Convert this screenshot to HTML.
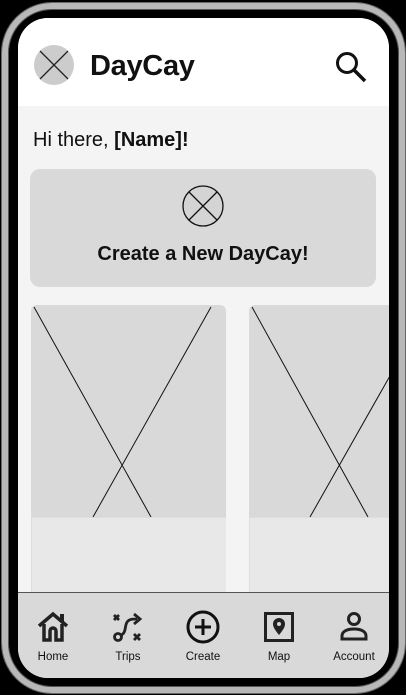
<!DOCTYPE html>
<html><head><style>
*{margin:0;padding:0;box-sizing:border-box}
body{width:406px;height:695px;background:#000;position:relative;overflow:hidden;font-family:"Liberation Sans",sans-serif}
.ring{position:absolute;left:2px;top:3px;width:403px;height:690px;border-radius:50px;border:6px solid #b8b8b8;box-shadow:inset 0 0 0 1px #555,0 0 0 1px #666}
.screen{position:absolute;left:18px;top:18px;width:371px;height:660px;border-radius:30px;background:#f4f4f4;overflow:hidden}
.hdr{position:absolute;left:0;top:0;width:371px;height:88px;background:#fff}
.title{position:absolute;left:72px;top:32px;font-size:29px;font-weight:bold;color:#111;letter-spacing:-0.3px}
.hi{position:absolute;left:15px;top:111px;font-size:20px;color:#111}
.create{position:absolute;left:12px;top:151px;width:346px;height:118px;border-radius:10px;background:#d9d9d9}
.ctext{position:absolute;left:0;width:346px;top:74px;text-align:center;font-size:20px;font-weight:bold;color:#111}
.card{position:absolute;top:287px;height:290px;background:#d9d9d9;border-radius:6px 6px 0 0;overflow:hidden}
.card .bot{position:absolute;left:0;right:0;top:212px;bottom:0;background:#e8e8e8;border-top:1px solid #ddd;border-left:1px solid #ddd}
.nav{position:absolute;left:0;top:574px;width:371px;height:86px;background:#d9d9d9;border-top:1.5px solid #555}
.it{position:absolute;top:17px;width:70px;text-align:center;font-size:11.5px;color:#111}
.it svg{display:block;margin:0 auto 7px}
</style></head><body>
<div class="ring"></div>
<div class="screen">
 <div class="hdr">
  <svg style="position:absolute;left:16px;top:27px" width="40" height="40"><circle cx="20" cy="20" r="20" fill="#cccccc"/><path d="M6 6L34 34M34 6L6 34" stroke="#222" stroke-width="1.3"/></svg>
  <div class="title">DayCay</div>
  <svg style="position:absolute;left:316px;top:32px" width="34" height="34"><circle cx="13" cy="13" r="9.5" fill="none" stroke="#111" stroke-width="3"/><path d="M20 20L31 31" stroke="#111" stroke-width="3.5"/></svg>
 </div>
 <div class="hi">Hi there, <b>[Name]!</b></div>
 <div class="create">
  <svg style="position:absolute;left:152px;top:16px" width="42" height="42"><circle cx="21" cy="21" r="20" fill="#d4d4d4" stroke="#111" stroke-width="1.3"/><path d="M7 7L35 35M35 7L7 35" stroke="#111" stroke-width="1.3"/></svg>
  <div class="ctext">Create a New DayCay!</div>
 </div>
 <div class="card" style="left:13px;width:195px">
  <svg style="position:absolute;left:0;top:0" width="195" height="212"><path d="M3 2L120 212M180 2L62 212" stroke="#111" stroke-width="1"/></svg>
  <div class="bot"></div>
 </div>
 <div class="card" style="left:231px;width:150px">
  <svg style="position:absolute;left:0;top:0" width="150" height="212"><path d="M3 2L119 212M180 2L61 212" stroke="#111" stroke-width="1"/></svg>
  <div class="bot"></div>
 </div>
 <div class="nav">
  <div class="it" style="left:0">
   <svg width="34" height="34" viewBox="0 0 34 34"><path d="M3 16L17 4L31 16" fill="none" stroke="#222" stroke-width="3.5"/><rect x="24" y="4" width="4" height="8" fill="#222"/><path d="M8 14V30H14V21A3 3 0 0 1 20 21V30H26V14" fill="none" stroke="#222" stroke-width="3.5"/></svg>Home</div>
  <div class="it" style="left:75px">
   <svg width="34" height="34" viewBox="0 0 34 34"><path d="M3 5L8 10M8 5L3 10M23 24L29 30M29 24L23 30" stroke="#222" stroke-width="2.8"/><circle cx="7" cy="27" r="3.5" fill="none" stroke="#222" stroke-width="2.8"/><path d="M10 25C16 23 13 14 17 11C19 9 22 9 26 9" fill="none" stroke="#222" stroke-width="2.8"/><path d="M23 4L29 9L23 14" fill="none" stroke="#222" stroke-width="2.8"/></svg>Trips</div>
  <div class="it" style="left:150px">
   <svg width="34" height="34" viewBox="0 0 34 34"><circle cx="17" cy="17" r="15" fill="none" stroke="#111" stroke-width="3"/><path d="M17 9V25M9 17H25" stroke="#111" stroke-width="3"/></svg>Create</div>
  <div class="it" style="left:226px">
   <svg width="34" height="34" viewBox="0 0 34 34"><rect x="3.5" y="3.5" width="27" height="27" fill="none" stroke="#222" stroke-width="3"/><path d="M17 25C13 20 11 17 11 14A6 6 0 0 1 23 14C23 17 21 20 17 25Z" fill="#222"/><circle cx="17" cy="14" r="2" fill="#d9d9d9"/></svg>Map</div>
  <div class="it" style="left:301px">
   <svg width="34" height="34" viewBox="0 0 34 34"><circle cx="17" cy="9" r="5.5" fill="none" stroke="#222" stroke-width="3"/><path d="M5 29V26C5 22 9 19 17 19C25 19 29 22 29 26V29Z" fill="none" stroke="#222" stroke-width="3"/></svg>Account</div>
 </div>
</div>
</body></html>
